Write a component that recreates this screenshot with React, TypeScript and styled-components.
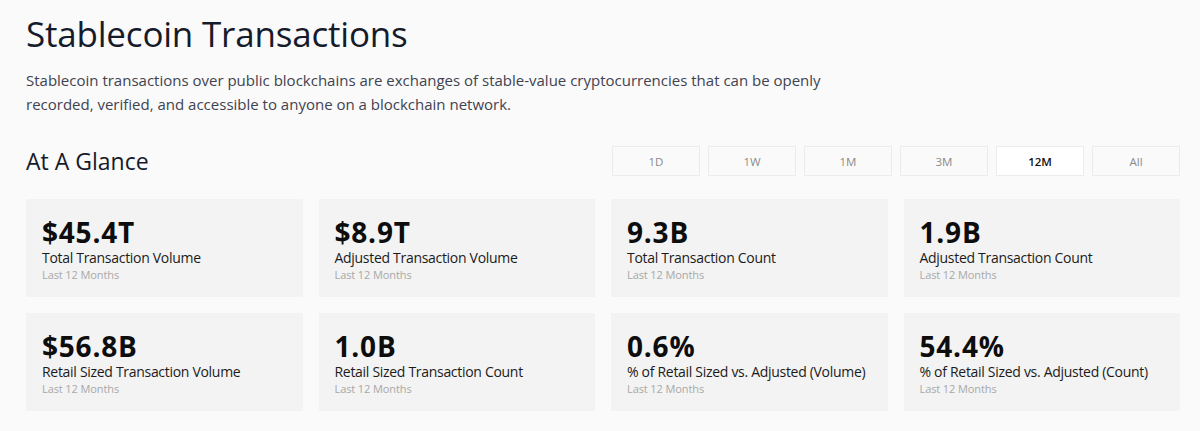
import styled, { createGlobalStyle } from "styled-components";
import { useState } from "react";

const GlobalStyle = createGlobalStyle`
  body {
    margin: 0;
    background: #fafafa;
    font-family: "Open Sans", "Noto Sans", sans-serif;
  }
`;

const Page = styled.div`
  padding: 12px 20px 20px 26px;
  width: 1154px;
`;

const Title = styled.h1`
  margin: 0;
  font-size: 35px;
  font-weight: 500;
  line-height: 44px;
  color: #161b2b;
  letter-spacing: -0.2px;
`;

const Description = styled.p`
  margin: 12px 0 0;
  max-width: 840px;
  font-size: 15px;
  line-height: 24px;
  color: #3f4350;
`;

const GlanceHeader = styled.div`
  display: flex;
  align-items: center;
  justify-content: space-between;
  margin-top: 29px;
`;

const SectionTitle = styled.h2`
  margin: 0;
  font-size: 23px;
  font-weight: 500;
  color: #161b2b;
`;

const RangeTabs = styled.div`
  display: flex;
  gap: 8px;
`;

const RangeButton = styled.button<{ $active?: boolean }>`
  width: 88px;
  height: 30px;
  border: 1px solid #ececec;
  background: ${(p) => (p.$active ? "#ffffff" : "#fafafa")};
  color: ${(p) => (p.$active ? "#111" : "#8a8a8a")};
  font-family: inherit;
  font-size: 11.5px;
  font-weight: ${(p) => (p.$active ? 600 : 400)};
  cursor: pointer;
`;

const Grid = styled.div`
  display: grid;
  grid-template-columns: repeat(4, 1fr);
  gap: 16px;
  margin-top: 22px;
`;

const Card = styled.div`
  background: #f3f3f3;
  height: 98px;
  padding: 16px 16px 0;
  box-sizing: border-box;
`;

const Value = styled.div`
  font-size: 28px;
  font-weight: 700;
  line-height: 34px;
  color: #0d0d0d;
  letter-spacing: 0.8px;
`;

const Label = styled.div`
  font-size: 14px;
  font-weight: 500;
  line-height: 18px;
  color: #1b1b1b;
  letter-spacing: -0.3px;
`;

const Period = styled.div`
  font-size: 11px;
  line-height: 16px;
  color: #a8a8a8;
  letter-spacing: -0.1px;
`;

const ranges = ["1D", "1W", "1M", "3M", "12M", "All"];

const stats = [
  { value: "$45.4T", label: "Total Transaction Volume" },
  { value: "$8.9T", label: "Adjusted Transaction Volume" },
  { value: "9.3B", label: "Total Transaction Count" },
  { value: "1.9B", label: "Adjusted Transaction Count" },
  { value: "$56.8B", label: "Retail Sized Transaction Volume" },
  { value: "1.0B", label: "Retail Sized Transaction Count" },
  { value: "0.6%", label: "% of Retail Sized vs. Adjusted (Volume)" },
  { value: "54.4%", label: "% of Retail Sized vs. Adjusted (Count)" },
];

export default function App() {
  const [range, setRange] = useState("12M");
  return (
    <>
      <GlobalStyle />
      <Page>
        <Title>Stablecoin Transactions</Title>
        <Description>
          Stablecoin transactions over public blockchains are exchanges of
          stable-value cryptocurrencies that can be openly recorded, verified,
          and accessible to anyone on a blockchain network.
        </Description>

        <GlanceHeader>
          <SectionTitle>At A Glance</SectionTitle>
          <RangeTabs>
            {ranges.map((r) => (
              <RangeButton key={r} $active={r === range} onClick={() => setRange(r)}>
                {r}
              </RangeButton>
            ))}
          </RangeTabs>
        </GlanceHeader>

        <Grid>
          {stats.map((s) => (
            <Card key={s.label}>
              <Value>{s.value}</Value>
              <Label>{s.label}</Label>
              <Period>Last 12 Months</Period>
            </Card>
          ))}
        </Grid>
      </Page>
    </>
  );
}
